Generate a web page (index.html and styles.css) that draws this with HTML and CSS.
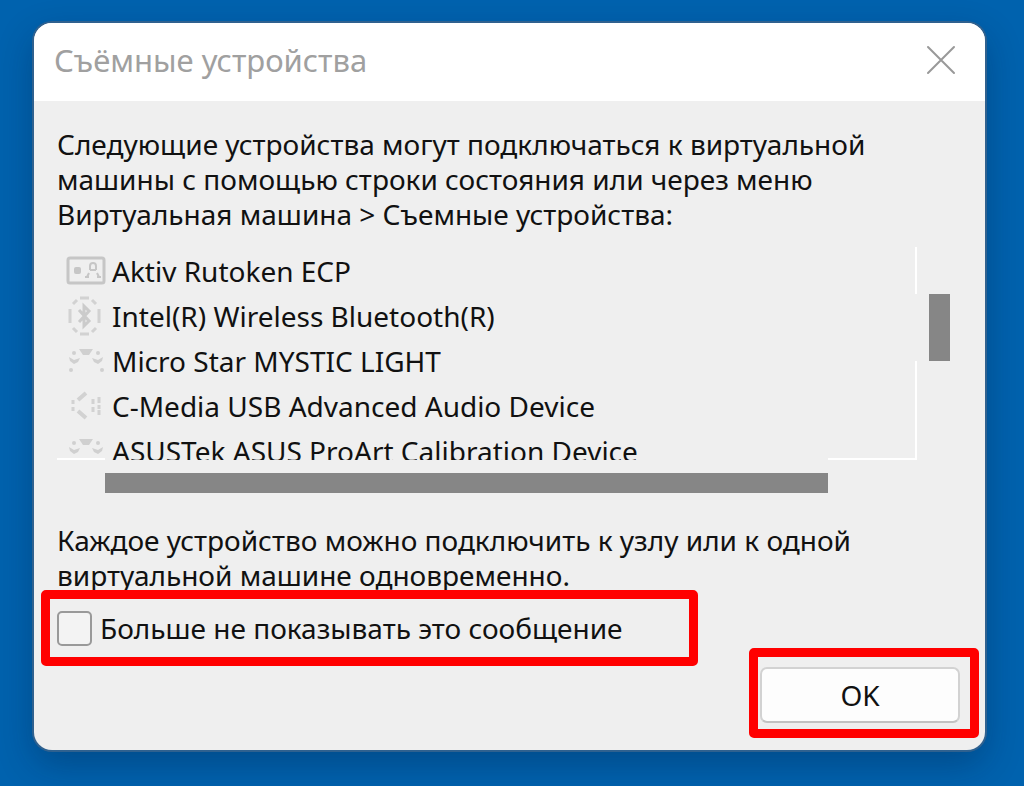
FILE: index.html
```html
<!DOCTYPE html>
<html lang="ru">
<head>
    <meta charset="UTF-8">
    <meta name="viewport" content="width=device-width, initial-scale=1.0">
    <title>Съёмные устройства</title>
    <link rel="stylesheet" href="styles.css">
</head>
<body>
    <div class="dialog" role="dialog" aria-labelledby="dialogTitle">
        <div class="titlebar">
            <h1 id="dialogTitle" class="title">Съёмные устройства</h1>
            <button class="close" aria-label="Закрыть">
                <svg width="30" height="30" viewBox="0 0 30 30" fill="none" stroke="#999" stroke-width="2" stroke-linecap="round">
                    <path d="M2 2L28 28M28 2L2 28"/>
                </svg>
            </button>
        </div>

        <div class="content">
            <p class="text">Следующие устройства могут подключаться к виртуальной<br>машины с помощью строки состояния или через меню<br>Виртуальная машина &gt; Съемные устройства:</p>

            <div class="device-box">
                <ul class="devices">
                    <li class="device">
                        <svg class="icon" viewBox="0 0 40 40" fill="none" stroke="#c6c6c6" stroke-width="3">
                            <rect x="2" y="7" width="36" height="25" rx="2"/>
                            <rect x="8" y="16" width="7" height="7" rx="2" fill="#c6c6c6" stroke="none"/>
                            <path d="M24 19v-4q0-3 3-3t3 3v4M24 19h6M21 26l2-4M33 26l-2-4M19 26h4M31 26h4" stroke-width="2"/>
                        </svg>
                        Aktiv Rutoken ECP
                    </li>
                    <li class="device">
                        <svg class="icon" viewBox="0 0 40 40" fill="none" stroke="#d2d2d2" stroke-width="3">
                            <path d="M14 2h9M7 8l4-4M26 4l4 4M4 13v14M33 13v14M7 32l4 4M26 36l4-4M14 38h9"/>
                            <path d="M13 14l10 11-5 5V10l5 5-10 11" stroke="#cbcbcb"/>
                        </svg>
                        Intel(R) Wireless Bluetooth(R)
                    </li>
                    <li class="device">
                        <svg class="icon" viewBox="0 0 40 40" fill="#d0d0d0">
                            <path d="M13 8h14l-4 6h-6z"/>
                            <path d="M3 16l5 3 6-2-2 4-4 2-4-3zM37 16l-5 3-6-2 2 4 4 2 4-3z"/>
                            <circle cx="8" cy="12" r="2"/><circle cx="32" cy="12" r="2"/>
                            <circle cx="5" cy="29" r="2"/><circle cx="36" cy="29" r="2"/>
                        </svg>
                        Micro Star MYSTIC LIGHT
                    </li>
                    <li class="device">
                        <svg class="icon" viewBox="0 0 40 40" fill="none" stroke="#d2d2d2" stroke-width="4">
                            <path d="M12 14l8-7M12 25l8 7"/>
                            <path d="M7 14v4M7 21v4" stroke-width="3"/>
                            <path d="M27 13v5M27 21v5M33 11v6M33 19v4M33 24v5" stroke-width="3"/>
                        </svg>
                        C-Media USB Advanced Audio Device
                    </li>
                    <li class="device">
                        <svg class="icon" viewBox="0 0 40 40" fill="#d0d0d0">
                            <path d="M13 8h14l-4 6h-6z"/>
                            <path d="M3 16l5 3 6-2-2 4-4 2-4-3zM37 16l-5 3-6-2 2 4 4 2 4-3z"/>
                            <circle cx="8" cy="12" r="2"/><circle cx="32" cy="12" r="2"/>
                        </svg>
                        ASUSTek ASUS ProArt Calibration Device
                    </li>
                </ul>
                <div class="scroll-y"></div>
                <div class="scroll-x"></div>
            </div>

            <p class="text">Каждое устройство можно подключить к узлу или к одной<br>виртуальной машине одновременно.</p>

            <div class="option">
                <input type="checkbox" id="dontShow" class="checkbox">
                <label for="dontShow">Больше не показывать это сообщение</label>
            </div>

            <div class="actions">
                <div class="ok-wrap">
                    <button class="ok">OK</button>
                </div>
            </div>
        </div>
    </div>
</body>
</html>
```
FILE: styles.css
```css
* {
    box-sizing: border-box;
}

body {
    margin: 0;
    min-height: 100vh;
    padding: 23px 39px 36px 34px;
    background-color: #0062ae;
    font-family: "Noto Sans", sans-serif;
    font-size: 28px;
    color: #111;
    overflow: hidden;
}

.dialog {
    border-radius: 18px;
    background-color: #efefef;
    box-shadow: 0 0 0 2px #2f618f, 0 14px 36px rgba(0, 20, 50, 0.3);
}

.titlebar {
    display: flex;
    align-items: center;
    justify-content: space-between;
    height: 78px;
    padding: 0 29px 4px 20px;
    background-color: #fff;
    border-radius: 18px 18px 0 0;
}

.title {
    margin: 0;
    font-size: 31px;
    font-weight: 400;
    color: #a0a0a0;
}

.close {
    display: flex;
    padding: 0;
    border: none;
    background: none;
}

.content {
    padding: 26px 25px 27px 23px;
}

.text {
    margin: 0;
    line-height: 35px;
    white-space: nowrap;
}

.device-box {
    display: grid;
    grid-template-columns: 1fr 21px;
    column-gap: 12px;
    row-gap: 13px;
    margin: 15px 10px 30px 0;
}

/* the frame lines are broken where the scroll thumbs are */
.devices {
    height: 213px;
    margin: 0;
    padding: 1px 0 0 9px;
    list-style: none;
    overflow: hidden;
    background-image:
        linear-gradient(#fff 47px, transparent 47px 114px, #fff 114px),
        linear-gradient(90deg, #fff 48px, transparent 48px calc(100% - 89px), #fff calc(100% - 89px));
    background-size: 2px 100%, 100% 2px;
    background-position: right top, left bottom;
    background-repeat: no-repeat;
}

.device {
    display: flex;
    align-items: center;
    gap: 6px;
    height: 45px;
    white-space: nowrap;
}

.icon {
    width: 40px;
    height: 40px;
    flex: none;
}

.scroll-y {
    height: 67px;
    margin-top: 47px;
    background-color: #868686;
}

.scroll-x {
    height: 20px;
    margin: 0 89px 0 48px;
    background-color: #868686;
}

.option {
    position: relative;
    display: flex;
    align-items: center;
    gap: 8px;
    width: 71%;
    height: 36px;
    margin-top: 17px;
}

.checkbox {
    appearance: none;
    width: 35px;
    height: 35px;
    margin: 0;
    border: 2px solid #999;
    border-radius: 5px;
    background-color: #f3f3f3;
}

.option::after,
.ok-wrap::after {
    content: "";
    position: absolute;
    border: 9px solid #f00;
    border-radius: 5px;
    pointer-events: none;
}

.option::after {
    inset: -20px 0 -20px -16px;
}

.actions {
    display: flex;
    justify-content: flex-end;
    margin-top: 21px;
}

.ok-wrap {
    position: relative;
}

.ok-wrap::after {
    inset: -19px -19px -15px -11px;
}

.ok {
    display: block;
    width: 200px;
    height: 56px;
    border: 2px solid #d2d2d2;
    border-bottom-color: #c2c2c2;
    border-radius: 7px;
    background-color: #fdfdfd;
    font-family: inherit;
    font-size: inherit;
    color: inherit;
}
```
